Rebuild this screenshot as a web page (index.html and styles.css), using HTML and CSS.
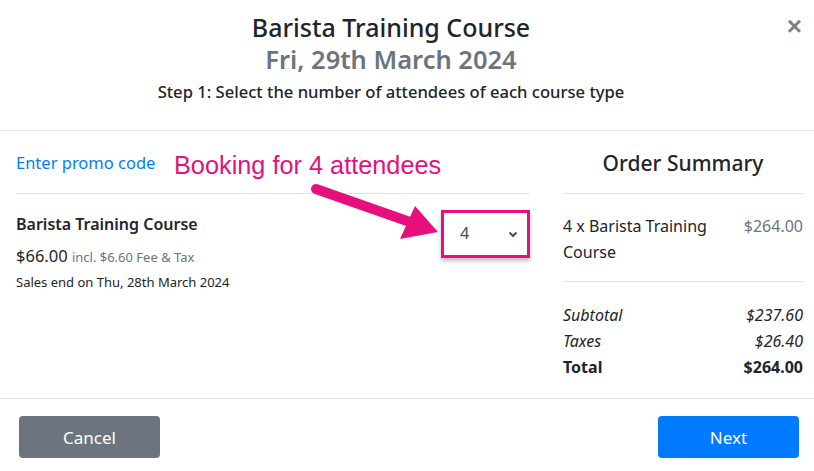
FILE: index.html
```html
<!doctype html>
<html lang="en">
<head>
	<meta charset="utf-8">
	<meta name="viewport" content="width=device-width, initial-scale=1">
	<title>Barista Training Course</title>
	<link rel="stylesheet" href="styles.css">
</head>
<body>

	<div class="modal">

		<header class="modal-header">
			<h4 class="modal-title">Barista Training Course</h4>
			<h5 class="modal-date">Fri, 29th March 2024</h5>
			<p class="modal-step">Step 1: Select the number of attendees of each course type</p>
			<button class="close" type="button">&times;</button>
		</header>

		<main class="modal-body">

			<section class="tickets">
				<a class="promo" href="#">Enter promo code</a>
				<div class="ticket">
					<div class="ticket-info">
						<h6 class="ticket-name">Barista Training Course</h6>
						<p class="ticket-price">$66.00 <small>incl. $6.60 Fee &amp; Tax</small></p>
						<p class="ticket-end">Sales end on Thu, 28th March 2024</p>
					</div>
					<div class="ticket-qty">
						<div class="qty-select">
							<span>4</span>
							<svg width="10" height="7" viewBox="0 0 10 7"><path d="M1.5 1.5 5 5 8.5 1.5" fill="none" stroke="#495057" stroke-width="2"/></svg>
						</div>
					</div>
				</div>
			</section>

			<aside class="summary">
				<h5 class="summary-title">Order Summary</h5>
				<div class="summary-line">
					<span>4 x Barista Training Course</span>
					<span class="muted">$264.00</span>
				</div>
				<div class="summary-totals">
					<div class="row italic"><span>Subtotal</span><span>$237.60</span></div>
					<div class="row italic"><span>Taxes</span><span>$26.40</span></div>
					<div class="row bold"><span>Total</span><span>$264.00</span></div>
				</div>
			</aside>

			<!-- annotation -->
			<div class="note">Booking for 4 attendees</div>
			<svg class="note-arrow" width="814" height="300" viewBox="0 131 814 300">
				<line x1="316" y1="189" x2="410" y2="222" stroke="#e6107d" stroke-width="10" stroke-linecap="round"/>
				<polygon points="415,206 400,239 438,232" fill="#e6107d"/>
			</svg>
		</main>

		<footer class="modal-footer">
			<button class="btn btn-secondary">Cancel</button>
			<button class="btn btn-primary">Next</button>
		</footer>

	</div>

</body>
</html>
```
FILE: styles.css
```css
:root {
	--text: #212529;
	--muted: #6c757d;
	--line: #dee2e6;
	--blue: #007bff;
	--pink: #e6107d;
}

html, body {
	margin: 0;
	height: 100%;
	background: #fff;
}
body {
	font-family: "Noto Sans", "Open Sans", sans-serif;
	color: var(--text);
	font-size: 16px;
}
.modal {
	height: 471px;
	display: flex;
	flex-direction: column;
}

/* header */
.modal-header {
	position: relative;
	height: 131px;
	box-sizing: border-box;
	border-bottom: 1px solid var(--line);
	text-align: center;
	padding: 11px 32px 0 0;
}
.modal-title {
	margin: 0;
	font-size: 25px;
	font-weight: 500;
	line-height: 32px;
}
.modal-date {
	margin: 0;
	font-size: 25.5px;
	font-weight: 600;
	line-height: 32px;
	color: var(--muted);
}
.modal-step {
	margin: 5px 0 0;
	font-size: 16.6px;
	font-weight: 500;
	line-height: 24px;
}
.close {
	position: absolute;
	top: 13px;
	right: 12px;
	border: 0;
	background: none;
	font-size: 26px;
	font-weight: 700;
	color: #000;
	opacity: .5;
	padding: 0;
	line-height: 1;
	font-family: "Liberation Sans", sans-serif;
}

/* body */
.modal-body {
	position: relative;
	flex: 1;
	display: grid;
	grid-template-columns: 513px 240px;
	column-gap: 34px;
	padding: 0 11px 0 16px;
}
.promo {
	display: block;
	color: var(--blue);
	text-decoration: none;
	font-size: 16.5px;
	line-height: 24px;
	padding: 20px 0 18px;
	border-bottom: 1px solid var(--line);
}
.ticket {
	display: flex;
	justify-content: space-between;
	padding-top: 18px;
}
.ticket-name {
	margin: 0;
	font-size: 16px;
	font-weight: 600;
	line-height: 24px;
}
.ticket-price {
	margin: 8px 0 0;
	font-size: 16.5px;
	line-height: 24px;
}
.ticket-price small {
	font-size: 13px;
	color: var(--muted);
}
.ticket-end {
	margin: 3px 0 0;
	font-size: 13px;
	line-height: 20px;
}
.ticket-qty {
	padding-top: -2px;
	margin-top: -2px;
}
.qty-select {
	width: 89px;
	height: 48px;
	box-sizing: border-box;
	margin: 0 -1px 0 0;
	display: flex;
	justify-content: space-between;
	align-items: center;
	padding: 0 9px 0 16px;
	border: 3px solid var(--pink);
	box-shadow: 0 3px 4px rgba(0, 0, 0, .25);
	color: #495057;
	font-size: 17px;
}
.qty-select span {
	font-family: "Liberation Sans", sans-serif;
}

/* summary */
.summary-title {
	margin: 0;
	text-align: center;
	font-size: 21px;
	font-weight: 500;
	line-height: 30px;
	padding: 17px 0 15px;
	border-bottom: 1px solid var(--line);
}
.summary-line {
	display: flex;
	justify-content: space-between;
	gap: 20px;
	line-height: 26px;
	padding: 19px 0 16px;
	border-bottom: 1px solid var(--line);
}
.muted {
	color: var(--muted);
}
.summary-totals {
	padding-top: 20px;
}
.row {
	display: flex;
	justify-content: space-between;
	line-height: 26px;
}
.italic {
	font-style: italic;
}
.bold {
	font-weight: 700;
}

/* annotation */
.note {
	position: absolute;
	left: 174px;
	top: 19px;
	color: var(--pink);
	font-family: "Liberation Sans", sans-serif;
	font-size: 25.3px;
	line-height: 30px;
}
.note-arrow {
	position: absolute;
	left: 0;
	top: 0;
	pointer-events: none;
}

/* footer */
.modal-footer {
	height: 73px;
	box-sizing: border-box;
	border-top: 1px solid var(--line);
	display: flex;
	justify-content: space-between;
	align-items: flex-start;
	padding: 17px 15px 0 19px;
}
.btn {
	width: 141px;
	height: 42px;
	border: 0;
	border-radius: 4px;
	color: #fff;
	font-family: inherit;
	font-size: 17px;
}
.btn-secondary {
	background: var(--muted);
}
.btn-primary {
	background: var(--blue);
}
```
